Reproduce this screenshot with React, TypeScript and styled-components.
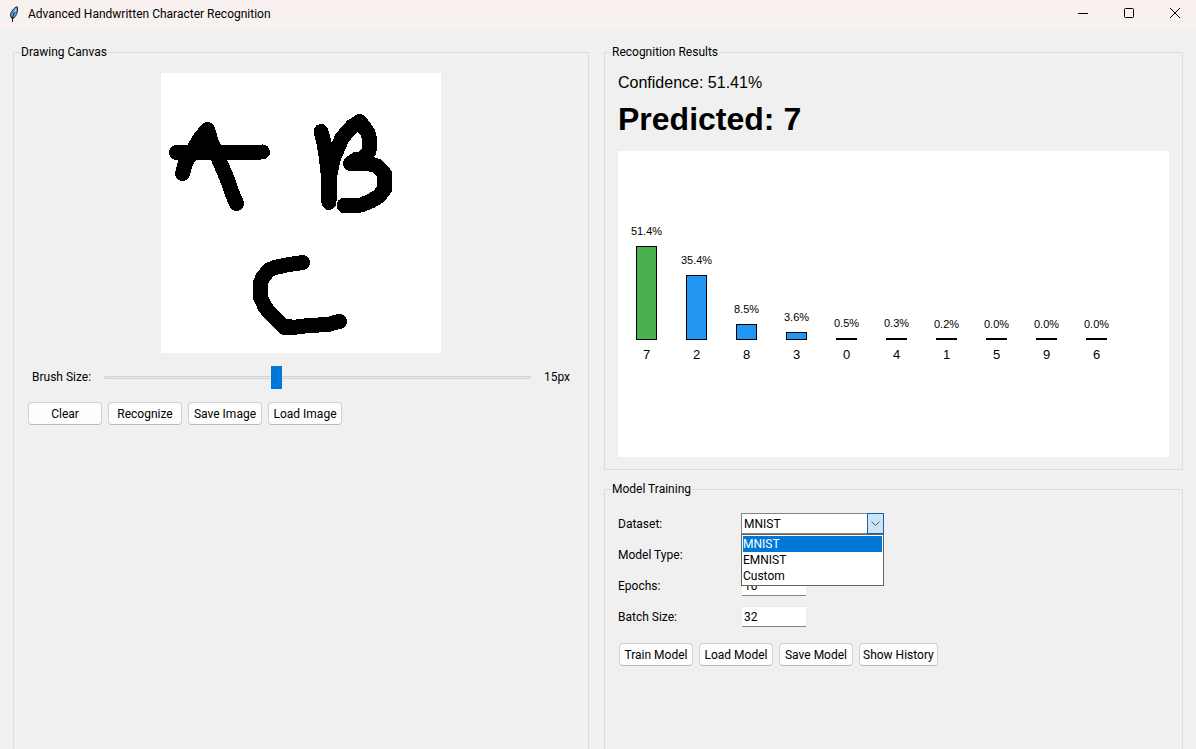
import React, { useState } from "react";
import styled, { createGlobalStyle } from "styled-components";

const GlobalStyle = createGlobalStyle`
  * { box-sizing: border-box; }
  body {
    margin: 0;
    background: #f0f0f0;
    color: #000;
    font: 12px/16px Roboto, "Open Sans", sans-serif;
  }
`;

const Window = styled.div`
  display: flex;
  flex-direction: column;
  min-height: 100vh;
`;

const TitleBar = styled.header`
  display: flex;
  align-items: center;
  height: 29px;
  padding-left: 8px;
  background: #f9f1ef;
`;

const Title = styled.h1`
  flex: 1;
  margin: 0 0 2px 8px;
  font-size: 12px;
  font-weight: 400;
  line-height: 16px;
`;

const WindowControls = styled.div`
  display: flex;
  gap: 4px;
  align-self: stretch;
`;

const ControlButton = styled.button`
  display: flex;
  align-items: center;
  justify-content: center;
  width: 42px;
  padding: 0 0 3px;
  border: 0;
  background: transparent;
`;

const Workspace = styled.main`
  flex: 1;
  display: grid;
  grid-template-columns: 576fr 579fr;
  gap: 15px;
  padding: 15px 13px 0;
`;

const Column = styled.div`
  display: flex;
  flex-direction: column;
  gap: 11px;
  min-width: 0;
`;

const Group = styled.fieldset<{ $fill?: boolean }>`
  flex: ${(p) => (p.$fill ? "1" : "none")};
  min-width: 0;
  margin: 0;
  padding: 13px 13px 12px;
  border: 1px solid #dcdcdc;
  border-bottom-width: ${(p) => (p.$fill ? "0" : "1px")};
`;

const GroupTitle = styled.legend`
  margin-left: -7px;
  padding: 0 1px;
  line-height: 16px;
`;

const Drawing = styled.svg`
  display: block;
  width: 280px;
  height: 280px;
  margin: 0 auto;
  background: #fff;
`;

const BrushRow = styled.div`
  display: flex;
  align-items: center;
  gap: 13px;
  height: 24px;
  margin: 12px 5px 13px;
`;

const BrushSlider = styled.input`
  flex: 1;
  min-width: 0;
  height: 23px;
  margin: 0;
  appearance: none;
  background: transparent;

  &::-webkit-slider-runnable-track {
    height: 3px;
    border: 1px solid #d6d6d6;
    background: #e7e7e7;
  }

  &::-webkit-slider-thumb {
    appearance: none;
    width: 11px;
    height: 23px;
    margin-top: -11px;
    background: #0078d7;
  }
`;

const ButtonRow = styled.div`
  display: flex;
  gap: 6px;
  padding: 0 1px;
`;

const PushButton = styled.button`
  min-width: 74px;
  height: 23px;
  padding: 0 3px;
  border: 1px solid #d0d0d0;
  border-bottom-color: #bababa;
  border-radius: 4px;
  background: #fdfdfd;
  color: #000;
  font: inherit;
  white-space: nowrap;
`;

const Confidence = styled.p`
  margin: 0;
  font: 16px/20px "Liberation Sans", Arial, sans-serif;
`;

const Prediction = styled.h2`
  margin: 7px 0 13px;
  font: bold 32px/38px "Liberation Sans", Arial, sans-serif;
`;

const Chart = styled.svg`
  display: block;
  width: 100%;
  height: 306px;
  background: #fff;
  font-family: "Liberation Sans", Arial, sans-serif;
`;

const Form = styled.div`
  display: grid;
  grid-template-columns: 123px 1fr;
  grid-auto-rows: 21px;
  row-gap: 10px;
  align-items: center;
  margin: 3px 0 16px;
`;

const Combo = styled.div`
  position: relative;
  width: 143px;
  height: 21px;
`;

const ComboSelect = styled.select`
  width: 100%;
  height: 100%;
  padding: 0 20px 0 2px;
  border: 1px solid #838383;
  border-radius: 0;
  appearance: none;
  background: #fff;
  color: #000;
  font: inherit;
`;

const ComboArrow = styled.span`
  position: absolute;
  top: 0;
  right: 0;
  display: flex;
  align-items: center;
  justify-content: center;
  width: 17px;
  height: 21px;
  border: 1px solid #1062ab;
  background: #cce4f7;
  pointer-events: none;
`;

const ComboList = styled.ul`
  position: absolute;
  z-index: 1;
  top: 21px;
  left: 0;
  width: 100%;
  margin: 0;
  padding: 1px;
  border: 1px solid #646464;
  background: #fff;
  list-style: none;
`;

const ComboOption = styled.li<{ $selected: boolean }>`
  height: 16px;
  background: ${(p) => (p.$selected ? "#0078d7" : "transparent")};
  color: ${(p) => (p.$selected ? "#fff" : "#000")};
`;

const Entry = styled.input`
  width: 64px;
  height: 21px;
  margin: 0 0 0 1px;
  padding: 0 2px;
  border: 0;
  border-top: 1px solid #ececec;
  border-bottom: 1px solid #868686;
  background: #fff;
  color: #000;
  font: inherit;
`;

const STROKES = [
  "M15.5 79.5 L44 79.5 L101.5 79",
  "M21.5 100.5 L24 91 L32 77 L40 64 L46.5 56.5 L50 68 L52 73 L59 89 L67 108 L71 120 L75.5 130.5",
  "M46 60 L46 76 M40 66 L44 78",
  "M160 58.5 L163 70 L165.5 86 L167.5 104 L168 129.5 L168.5 104 L172 86 L181 65 L191 53.5 L199 48.5 L207 60 L208.5 66 L208 78 L202 86 L196 86 L189.5 90.5 L208 90.5 L216 93 L223.5 101 L223.5 116 L218 123 L210 128 L200 132 L183 132.5",
  "M141.5 189.5 L128 191.5 L114 194.5 L108 197 L102 204 L99.5 210 L99.5 224 L104 234 L109 240 L123.5 254.5 L131 254.5",
  "M123.5 254.5 L131 254.5 L148 252.5 L167 251.5 L172 250 L178.5 248.5",
  "M124 253 L127 253",
];

const RESULTS = [
  { label: "7", value: 51.4 },
  { label: "2", value: 35.4 },
  { label: "8", value: 8.5 },
  { label: "3", value: 3.6 },
  { label: "0", value: 0.5 },
  { label: "4", value: 0.3 },
  { label: "1", value: 0.2 },
  { label: "5", value: 0 },
  { label: "9", value: 0 },
  { label: "6", value: 0 },
];

const DATASETS = ["MNIST", "EMNIST", "Custom"];

function FeatherIcon() {
  return (
    <svg width="12" height="18" viewBox="0 0 12 18" aria-hidden="true">
      <path d="M4 12.5 L2.5 10 L3 6.5 L5.5 3 L8 1 L9.5 1 L9.5 5 L8.5 8.5 L6 12 Z" fill="#5b9be0" stroke="#1d2b3c" />
      <path d="M4.5 10.5 L8 3" stroke="#c2dcf7" />
      <path d="M4.5 16 L4.5 11 L6.5 6" fill="none" stroke="#111" />
    </svg>
  );
}

function ResultsChart() {
  return (
    <Chart role="img" aria-label="Prediction probabilities">
      {RESULTS.map((r, i) => {
        const center = 28.5 + i * 50;
        const rise = Math.round(r.value * 1.81);
        const height = Math.max(1, rise);
        return (
          <g key={r.label}>
            <text x={center} y={177 - rise} fontSize="11" textAnchor="middle">
              {r.value.toFixed(1)}%
            </text>
            <rect
              x={center - 10}
              y={188.5 - height}
              width="20"
              height={height}
              fill={i === 0 ? "#4caf50" : "#2196f3"}
              stroke="#000"
              shapeRendering="crispEdges"
            />
            <text x={center} y="208" fontSize="13" textAnchor="middle">
              {r.label}
            </text>
          </g>
        );
      })}
    </Chart>
  );
}

export default function App() {
  const [brush, setBrush] = useState(15);
  const [dataset, setDataset] = useState("MNIST");

  return (
    <Window>
      <GlobalStyle />
      <TitleBar>
        <FeatherIcon />
        <Title>Advanced Handwritten Character Recognition</Title>
        <WindowControls>
          <ControlButton aria-label="Minimize">
            <svg width="12" height="12" viewBox="0 0 12 12">
              <path d="M1 6.5 H11" stroke="#000" />
            </svg>
          </ControlButton>
          <ControlButton aria-label="Maximize">
            <svg width="12" height="12" viewBox="0 0 12 12">
              <rect x="1.5" y="1.5" width="9" height="9" rx="1" fill="none" stroke="#000" />
            </svg>
          </ControlButton>
          <ControlButton aria-label="Close">
            <svg width="12" height="12" viewBox="0 0 12 12">
              <path d="M1 1 L11 11 M11 1 L1 11" stroke="#000" />
            </svg>
          </ControlButton>
        </WindowControls>
      </TitleBar>

      <Workspace>
        <Column>
          <Group $fill>
            <GroupTitle>Drawing Canvas</GroupTitle>
            <Drawing viewBox="0 0 280 280" role="img" aria-label="Drawing">
              {STROKES.map((d) => (
                <path
                  key={d}
                  d={d}
                  fill="none"
                  stroke="#000"
                  strokeWidth="15"
                  strokeLinecap="round"
                  strokeLinejoin="round"
                  shapeRendering="crispEdges"
                />
              ))}
            </Drawing>
            <BrushRow>
              <label htmlFor="brush">Brush Size:</label>
              <BrushSlider
                id="brush"
                type="range"
                min={5}
                max={30}
                value={brush}
                onChange={(e) => setBrush(Number(e.target.value))}
              />
              <output htmlFor="brush">{brush}px</output>
            </BrushRow>
            <ButtonRow>
              <PushButton>Clear</PushButton>
              <PushButton>Recognize</PushButton>
              <PushButton>Save Image</PushButton>
              <PushButton>Load Image</PushButton>
            </ButtonRow>
          </Group>
        </Column>

        <Column>
          <Group>
            <GroupTitle>Recognition Results</GroupTitle>
            <Confidence>Confidence: 51.41%</Confidence>
            <Prediction>Predicted: 7</Prediction>
            <ResultsChart />
          </Group>

          <Group $fill>
            <GroupTitle>Model Training</GroupTitle>
            <Form>
              <label htmlFor="dataset">Dataset:</label>
              <Combo>
                <ComboSelect id="dataset" value={dataset} onChange={(e) => setDataset(e.target.value)}>
                  {DATASETS.map((d) => (
                    <option key={d}>{d}</option>
                  ))}
                </ComboSelect>
                <ComboArrow>
                  <svg width="9" height="6" viewBox="0 0 9 6" aria-hidden="true">
                    <path d="M0.5 0.5 L4.5 4.5 L8.5 0.5" fill="none" stroke="#555" />
                  </svg>
                </ComboArrow>
                <ComboList role="listbox" aria-label="Dataset options">
                  {DATASETS.map((d) => (
                    <ComboOption
                      key={d}
                      role="option"
                      aria-selected={d === dataset}
                      $selected={d === dataset}
                      onClick={() => setDataset(d)}
                    >
                      {d}
                    </ComboOption>
                  ))}
                </ComboList>
              </Combo>
              <label htmlFor="model">Model Type:</label>
              <Combo>
                <ComboSelect id="model" />
              </Combo>
              <label htmlFor="epochs">Epochs:</label>
              <Entry id="epochs" defaultValue="10" />
              <label htmlFor="batch">Batch Size:</label>
              <Entry id="batch" defaultValue="32" />
            </Form>
            <ButtonRow>
              <PushButton>Train Model</PushButton>
              <PushButton>Load Model</PushButton>
              <PushButton>Save Model</PushButton>
              <PushButton>Show History</PushButton>
            </ButtonRow>
          </Group>
        </Column>
      </Workspace>
    </Window>
  );
}
